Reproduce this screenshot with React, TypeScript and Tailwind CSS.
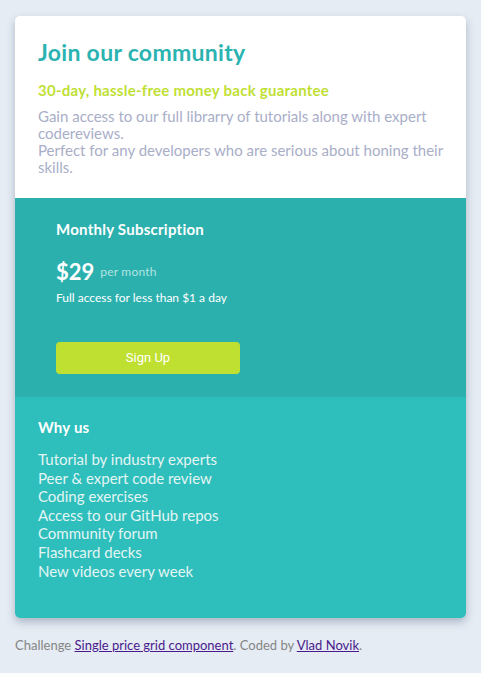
const perks = [
  'Tutorial by industry experts',
  'Peer & expert code review',
  'Coding exercises',
  'Access to our GitHub repos',
  'Community forum',
  'Flashcard decks',
  'New videos every week',
]

export default function App() {
  return (
    <div className="min-h-[673px] bg-[#e5ecf4] px-[15px] pt-4 pb-6 font-['Lato',sans-serif]">
      <div className="overflow-hidden rounded-[5px] shadow-[0_4px_8px_rgba(60,80,110,0.35)]">
        {/* Header */}
        <div className="bg-white px-[23px] pt-[23px] pb-[22px]">
          <h1 className="text-[23px] font-bold leading-[26px] tracking-[0.3px] text-[#2bb3b1]">Join our community</h1>
          <h2 className="mt-[15px] text-[15px] font-bold leading-[20px] tracking-[0.25px] text-[#c0df34]">30-day, hassle-free money back guarantee</h2>
          <p className="mt-[8px] text-[15px] leading-[17px] text-[#a9aec8]">
            Gain access to our full librarry of tutorials along with expert codereviews.
            <br />
            Perfect for any developers who are serious about honing their skills.
          </p>
        </div>

        {/* Subscription */}
        <div className="bg-[#2bb0ae] px-[41px] pt-[21px] pb-[23px] text-white">
          <h3 className="text-[15px] font-bold leading-[20px] tracking-[0.25px]">Monthly Subscription</h3>
          <div className="mt-[21px] flex items-center gap-[6px]">
            <span className="text-[22px] font-bold leading-[24px]">$29</span>
            <span className="text-[12px] tracking-[0.2px] text-[#b3e3e2]">per month</span>
          </div>
          <p className="mt-[6px] text-[12px] leading-[16px]">Full access for less than $1 a day</p>
          <button className="mt-[36px] h-[32px] w-[184px] rounded-[4px] bg-[#bfe031] font-['Roboto',sans-serif] text-[13px] text-white">
            Sign Up
          </button>
        </div>

        {/* Why us */}
        <div className="bg-[#2ebebb] px-[23px] pt-[20px] pb-[38px]">
          <h3 className="text-[15px] font-bold leading-[20px] tracking-[0.2px] text-white">Why us</h3>
          <ul className="mt-[13px] text-[15px] leading-[18.6px] text-[#e3f5f4]">
            {perks.map(p => (
              <li key={p}>{p}</li>
            ))}
          </ul>
        </div>
      </div>

      <p className="mt-[18px] text-[13px] text-[#858585]">
        Challenge{' '}
        <a href="#" className="text-[#4a1a8c] underline">Single price grid component</a>. Coded by{' '}
        <a href="#" className="text-[#4a1a8c] underline">Vlad Novik</a>.
      </p>
    </div>
  )
}
